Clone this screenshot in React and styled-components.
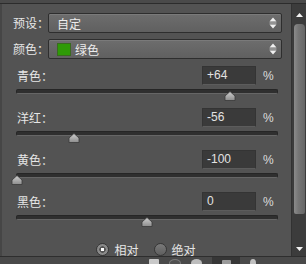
import React from 'react';
import styled, { createGlobalStyle } from 'styled-components';

const GlobalStyle = createGlobalStyle`
	html, body {
		margin: 0;
		padding: 0;
		background: #535353;
	}
	body {
		font-family: 'Noto Sans CJK SC', 'Liberation Sans', sans-serif;
	}
`;

const sliders = [
	{ label: '青色：', value: 64, text: '+64' },
	{ label: '洋红：', value: -56, text: '-56' },
	{ label: '黄色：', value: -100, text: '-100' },
	{ label: '黑色：', value: 0, text: '0' },
];

const Frame = styled.div`
	width: 306px;
	height: 264px;
	display: flex;
	flex-direction: column;
	background: #535353;
	overflow: hidden;
`;

const TopBar = styled.div`
	height: 3px;
	background: #4a4a4a;
	border-bottom: 1px solid #2c2c2c;
	flex-shrink: 0;
`;

const Body = styled.div`
	flex: 1;
	display: flex;
	min-height: 0;
`;

const Content = styled.div`
	flex: 1;
	border-left: 2px solid #464646;
	padding: 9px 13px 0 14px;
	display: flex;
	flex-direction: column;
`;

const SelectRow = styled.div`
	display: flex;
	align-items: center;
	margin: 0 -4px 0 -3px;
	margin-top: ${(p) => p.$gap || 0}px;
`;

const SelectLabel = styled.div`
	width: 35px;
	flex-shrink: 0;
	white-space: nowrap;
	font-size: 12px;
	color: #e6e6e6;
	line-height: 20px;
`;

const Select = styled.div`
	flex: 1;
	min-width: 0;
	height: 18px;
	border: 1px solid #2e2e2e;
	border-radius: 2px;
	background: linear-gradient(#6d6d6d, #606060);
	box-shadow: inset 0 1px 0 #7a7a7a;
	display: flex;
	align-items: center;
	padding-left: 8px;
	padding-right: 4px;
	gap: 4px;
	color: #ececec;
	font-size: 12px;
	white-space: nowrap;
`;

const SelectText = styled.span`
	flex: 1;
`;

const Swatch = styled.span`
	width: 14px;
	height: 13px;
	background: #2f9a07;
	border: 1px solid #3a6a20;
	box-sizing: border-box;
`;

const SliderBlock = styled.div`
	margin-top: ${(p) => p.$gap}px;
	display: flex;
	flex-direction: column;
`;

const ValueRow = styled.div`
	display: flex;
	align-items: center;
	height: 19px;
`;

const SliderLabel = styled.div`
	flex: 1;
	padding-left: 1px;
	font-size: 12px;
	color: #e6e6e6;
	white-space: nowrap;
`;

const Input = styled.div`
	width: 54px;
	height: 19px;
	box-sizing: border-box;
	background: #3a3a3a;
	border: 1px solid #343434;
	border-bottom-color: #5c5c5c;
	color: #e2e2e2;
	font-family: 'Liberation Sans', sans-serif;
	font-size: 12px;
	line-height: 17px;
	padding-left: 4px;
`;

const Percent = styled.div`
	width: 22px;
	padding-left: 7px;
	box-sizing: border-box;
	color: #dddddd;
	font-family: 'Liberation Sans', sans-serif;
	font-size: 12px;
`;

const Track = styled.div`
	position: relative;
	margin-top: 4px;
	height: 5px;
	box-sizing: border-box;
	background: #2f2f2f;
	border: 1px solid #262626;
	border-bottom-color: #666666;
	border-radius: 2px;
`;

const Thumb = styled.svg`
	position: absolute;
	top: 1px;
	margin-left: -6px;
	width: 12px;
	height: 10px;
`;

const RadioRow = styled.div`
	margin-top: 23px;
	display: flex;
	align-items: center;
	justify-content: center;
	gap: 15px;
	height: 13px;
`;

const RadioItem = styled.div`
	display: flex;
	align-items: center;
	gap: 5px;
	color: #e6e6e6;
	font-size: 12px;
	white-space: nowrap;
	margin-left: ${(p) => p.$offset || 0}px;
`;

const Radio = styled.span`
	width: 13px;
	height: 13px;
	box-sizing: border-box;
	border-radius: 50%;
	border: 1px solid #363636;
	background: ${(p) =>
		p.$on
			? 'radial-gradient(circle, #ffffff 0 1.5px, #555 2px 3px, #8a8a8a 3.5px)'
			: 'linear-gradient(#7a7a7a, #5e5e5e)'};
`;

const Scrollbar = styled.div`
	width: 15px;
	background: #3c3c3c;
	border-left: 1px solid #323232;
	box-sizing: border-box;
	display: flex;
	flex-direction: column;
	align-items: center;
	padding: 9px 0 4px;
`;

const ScrollThumb = styled.div`
	margin-top: 6px;
	width: 11px;
	height: 190px;
	border-radius: 4px 4px 2px 2px;
	background: linear-gradient(90deg, #8a8a8a, #767676 40%, #666666);
`;

const Spacer = styled.div`
	flex: 1;
`;

const BottomBar = styled.div`
	height: 7px;
	flex-shrink: 0;
	background: #494949;
	border-top: 1px solid #2e2e2e;
	overflow: hidden;
	display: flex;
	align-items: flex-start;
	padding-left: 149px;
	gap: 10px;
`;

const ToolIcon = styled.div`
	width: ${(p) => p.$w}px;
	height: 8px;
	margin-top: 2px;
	border-radius: ${(p) => (p.$round ? '50%' : '1px')};
	background: ${(p) => p.$bg};
	border: ${(p) => (p.$ring ? '1px solid #777' : 'none')};
	box-sizing: border-box;
`;

const ToolButton = styled.div`
	width: 28px;
	height: 8px;
	background: #363636;
	display: flex;
	justify-content: center;
	padding-top: 1px;
	box-sizing: border-box;
`;

const UpDown = () => (
	<svg width="8" height="12" viewBox="0 0 8 12">
		<path d="M4 0.5 L7.5 4.5 H0.5 Z" fill="#f0f0f0" />
		<rect x="0.5" y="5.5" width="7" height="1" fill="#bdbdbd" />
		<path d="M0.5 7.5 H7.5 L4 11.5 Z" fill="#f0f0f0" />
	</svg>
);

const Arrow = ({ down }) => (
	<svg width="7" height="5" viewBox="0 0 7 5">
		<path d={down ? 'M0 0 H7 L3.5 4 Z' : 'M3.5 0 L7 4 H0 Z'} fill="#f2f2f2" />
	</svg>
);

const ThumbIcon = ({ pct }) => (
	<Thumb style={{ left: `${pct}%` }} viewBox="0 0 12 10">
		<defs>
			<linearGradient id="tg" x1="0" y1="0" x2="0" y2="1">
				<stop offset="0" stopColor="#d0d0d0" />
				<stop offset="1" stopColor="#8c8c8c" />
			</linearGradient>
		</defs>
		<path d="M6 0.5 L11 5 V9.5 H1 V5 Z" fill="url(#tg)" stroke="#3a3a3a" strokeWidth="0.8" />
	</Thumb>
);

const App = () => {
	return (
		<>
			<GlobalStyle />
			<Frame>
				<TopBar />
				<Body>
					<Content>
						<SelectRow>
							<SelectLabel>预设：</SelectLabel>
							<Select>
								<SelectText>自定</SelectText>
								<UpDown />
							</Select>
						</SelectRow>
						<SelectRow $gap={6}>
							<SelectLabel>颜色：</SelectLabel>
							<Select>
								<Swatch />
								<SelectText>绿色</SelectText>
								<UpDown />
							</Select>
						</SelectRow>
						{sliders.map((s, i) => (
							<SliderBlock key={s.label} $gap={i === 0 ? 7 : 14}>
								<ValueRow>
									<SliderLabel>{s.label}</SliderLabel>
									<Input>{s.text}</Input>
									<Percent>%</Percent>
								</ValueRow>
								<Track>
									<ThumbIcon pct={((s.value + 100) / 200) * 100} />
								</Track>
							</SliderBlock>
						))}
						<RadioRow>
							<RadioItem $offset={-2}>
								<Radio $on />
								相对
							</RadioItem>
							<RadioItem>
								<Radio />
								绝对
							</RadioItem>
						</RadioRow>
					</Content>
					<Scrollbar>
						<Arrow />
						<ScrollThumb />
						<Spacer />
						<Arrow down />
					</Scrollbar>
				</Body>
				<BottomBar>
					<ToolIcon $w={10} $bg="#c8c8c8" />
					<ToolIcon $w={12} $round $ring $bg="#505050" />
					<ToolIcon $w={11} $round $bg="#bdbdbd" />
					<ToolButton>
						<ToolIcon $w={9} $bg="#9a9a9a" />
					</ToolButton>
					<ToolIcon $w={6} $round $bg="#c0c0c0" />
				</BottomBar>
			</Frame>
		</>
	);
};

export default App;
